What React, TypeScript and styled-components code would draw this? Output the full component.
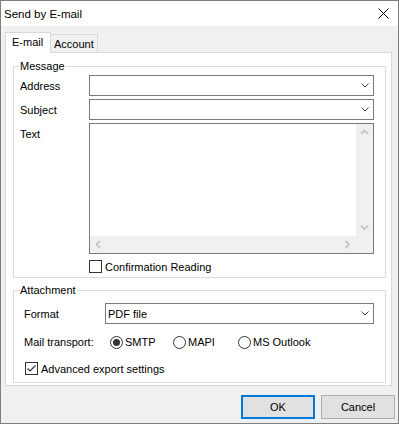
import React from 'react';
import styled, { createGlobalStyle } from 'styled-components';

const GlobalStyle = createGlobalStyle`
  html, body { margin: 0; padding: 0; background: #f0f0f0; }
  body { font-family: "Liberation Sans", Arial, sans-serif; font-size: 11px; color: #000; }
  * { box-sizing: border-box; }
`;

const Window = styled.div`
  width: 399px;
  height: 424px;
  border: 1px solid #7f7f7f;
  background: #f0f0f0;
  display: flex;
  flex-direction: column;
`;

const TitleBar = styled.div`
  height: 25px;
  background: #fff;
  display: flex;
  align-items: center;
  justify-content: space-between;
  padding: 0 9px 0 3px;
`;

const Title = styled.span`
  font-size: 11.5px;
  line-height: 14px;
`;

const CloseIcon = styled.svg`
  width: 11px;
  height: 11px;
  display: block;
`;

const Body = styled.div`
  flex: 1;
  display: flex;
  flex-direction: column;
  padding: 6px 0 4px 4px;
`;

const TabStrip = styled.div`
  display: flex;
  align-items: flex-end;
  height: 20px;
  position: relative;
  z-index: 1;
`;

const Tab = styled.div<{ $active?: boolean }>`
  width: ${p => (p.$active ? 46 : 47)}px;
  height: ${p => (p.$active ? 21 : 18)}px;
  margin-bottom: ${p => (p.$active ? -1 : 0)}px;
  border: 1px solid #d9d9d9;
  border-bottom: none;
  border-left: ${p => (p.$active ? '1px solid #d9d9d9' : 'none')};
  background: ${p => (p.$active ? '#fff' : '#f0f0f0')};
  display: flex;
  align-items: center;
  padding: ${p => (p.$active ? '0 0 3px 6px' : '1px 0 0 3px')};
  line-height: 14px;
`;

const TabPanel = styled.div`
  height: 334px;
  margin-right: 6px;
  border: 1px solid #d9d9d9;
  background: #fff;
  padding: 13px 5px 2px 7px;
  display: flex;
  flex-direction: column;
  gap: 12px;
`;

const GroupBox = styled.div<{ $h: number }>`
  position: relative;
  height: ${p => p.$h}px;
  border: 1px solid #dcdcdc;
`;

const Legend = styled.span`
  position: absolute;
  top: -8px;
  left: 5px;
  padding: 0 1px;
  background: #fff;
  line-height: 14px;
`;

const MessageGrid = styled.div`
  display: grid;
  grid-template-columns: 69px 285px;
  grid-template-rows: 21px 21px 131px 13px;
  row-gap: 3px;
  padding: 8px 0 0 6px;
`;

const FieldLabel = styled.div<{ $top?: boolean }>`
  display: flex;
  align-items: ${p => (p.$top ? 'flex-start' : 'center')};
  padding-top: ${p => (p.$top ? 4 : 0)}px;
  line-height: 14px;
`;

const Combo = styled.div`
  height: 21px;
  border: 1px solid #7a7a7a;
  background: #fff;
  display: flex;
  align-items: center;
  justify-content: space-between;
  padding: 0 4px 0 2px;
  line-height: 14px;
`;

const Chevron = styled.svg`
  width: 8px;
  height: 5px;
  display: block;
  margin-left: auto;
`;

const TextBox = styled.div`
  border: 1px solid #7a7a7a;
  background: #fff;
  display: grid;
  grid-template-columns: 1fr 17px;
  grid-template-rows: 1fr 17px;
`;

const ScrollTrack = styled.div<{ $vertical?: boolean }>`
  background: #f0f0f0;
  display: flex;
  flex-direction: ${p => (p.$vertical ? 'column' : 'row')};
  justify-content: space-between;
`;

const ScrollCorner = styled.div`
  background: #f0f0f0;
`;

const ArrowButton = styled.div`
  width: 17px;
  height: 17px;
  display: flex;
  align-items: center;
  justify-content: center;
`;

const CheckRow = styled.div`
  display: flex;
  align-items: center;
  gap: 3px;
  height: 13px;
  line-height: 14px;
`;

const ConfirmRow = styled(CheckRow)`
  margin-top: 3px;
`;

const AdvancedRow = styled(CheckRow)`
  margin-top: 13px;
  padding-left: 11px;
`;

const CheckBox = styled.div`
  width: 13px;
  height: 13px;
  border: 1px solid #333;
  background: #fff;
  flex: none;
  display: flex;
  align-items: center;
  justify-content: center;
`;

const AttachGrid = styled.div`
  display: grid;
  grid-template-columns: 81px 269px;
  padding: 12px 0 0 10px;
`;

const TransportRow = styled.div`
  display: grid;
  grid-template-columns: 86px 63px 65px auto;
  align-items: center;
  height: 14px;
  margin-top: 11px;
  padding-left: 10px;
  line-height: 14px;
`;

const RadioOption = styled.div`
  display: flex;
  align-items: center;
  gap: 2px;
`;

const Radio = styled.div<{ $checked?: boolean }>`
  width: 13px;
  height: 13px;
  border: 1px solid #333;
  border-radius: 50%;
  background: #fff;
  display: flex;
  align-items: center;
  justify-content: center;
  flex: none;
  &::after {
    content: '';
    width: 7px;
    height: 7px;
    border-radius: 50%;
    background: ${p => (p.$checked ? '#333' : 'transparent')};
  }
`;

const ButtonRow = styled.div`
  display: flex;
  justify-content: flex-end;
  gap: 6px;
  margin-top: 9px;
  padding-right: 3px;
  height: 24px;
`;

const Button = styled.button<{ $default?: boolean }>`
  width: 74px;
  height: 24px;
  margin: 0;
  padding: 0;
  font-family: inherit;
  font-size: 11px;
  color: #000;
  background: #e1e1e1;
  border: ${p => (p.$default ? '2px solid #0078d7' : '1px solid #adadad')};
  border-radius: 0;
`;

const DownChevron = () => (
  <Chevron viewBox="0 0 8 5">
    <path d="M0.5 0.5 L4 4 L7.5 0.5" fill="none" stroke="#444" strokeWidth="1" />
  </Chevron>
);

const ScrollArrow = ({ dir }: { dir: 'up' | 'down' | 'left' | 'right' }) => {
  const d = {
    up: 'M1 5 L4.5 1.5 L8 5',
    down: 'M1 1.5 L4.5 5 L8 1.5',
    left: 'M5 1 L1.5 4.5 L5 8',
    right: 'M1.5 1 L5 4.5 L1.5 8',
  }[dir];
  const vertical = dir === 'up' || dir === 'down';
  return (
    <ArrowButton>
      <svg width={vertical ? 9 : 7} height={vertical ? 7 : 9} viewBox={vertical ? '0 0 9 7' : '0 0 7 9'}>
        <path d={d} fill="none" stroke="#bfbfbf" strokeWidth="1.6" />
      </svg>
    </ArrowButton>
  );
};

export default function App() {
  return (
    <>
      <GlobalStyle />
      <Window>
        <TitleBar>
          <Title>Send by E-mail</Title>
          <CloseIcon viewBox="0 0 11 11">
            <path d="M0.5 0.5 L10.5 10.5 M10.5 0.5 L0.5 10.5" stroke="#000" strokeWidth="1" />
          </CloseIcon>
        </TitleBar>
        <Body>
          <TabStrip>
            <Tab $active>E-mail</Tab>
            <Tab>Account</Tab>
          </TabStrip>
          <TabPanel>
            <GroupBox $h={212}>
              <Legend>Message</Legend>
              <MessageGrid>
                <FieldLabel>Address</FieldLabel>
                <Combo>
                  <DownChevron />
                </Combo>
                <FieldLabel>Subject</FieldLabel>
                <Combo>
                  <DownChevron />
                </Combo>
                <FieldLabel $top>Text</FieldLabel>
                <TextBox>
                  <div />
                  <ScrollTrack $vertical>
                    <ScrollArrow dir="up" />
                    <ScrollArrow dir="down" />
                  </ScrollTrack>
                  <ScrollTrack>
                    <ScrollArrow dir="left" />
                    <ScrollArrow dir="right" />
                  </ScrollTrack>
                  <ScrollCorner />
                </TextBox>
                <div />
                <ConfirmRow>
                  <CheckBox />
                  <span>Confirmation Reading</span>
                </ConfirmRow>
              </MessageGrid>
            </GroupBox>
            <GroupBox $h={93}>
              <Legend>Attachment</Legend>
              <AttachGrid>
                <FieldLabel>Format</FieldLabel>
                <Combo>
                  <span>PDF file</span>
                  <DownChevron />
                </Combo>
              </AttachGrid>
              <TransportRow>
                <span>Mail transport:</span>
                <RadioOption>
                  <Radio $checked />
                  <span>SMTP</span>
                </RadioOption>
                <RadioOption>
                  <Radio />
                  <span>MAPI</span>
                </RadioOption>
                <RadioOption>
                  <Radio />
                  <span>MS Outlook</span>
                </RadioOption>
              </TransportRow>
              <AdvancedRow>
                <CheckBox>
                  <svg width="11" height="11" viewBox="0 0 11 11">
                    <path d="M1.5 5.5 L4 8 L9.5 2.5" fill="none" stroke="#333" strokeWidth="1.2" />
                  </svg>
                </CheckBox>
                <span>Advanced export settings</span>
              </AdvancedRow>
            </GroupBox>
          </TabPanel>
          <ButtonRow>
            <Button $default>OK</Button>
            <Button>Cancel</Button>
          </ButtonRow>
        </Body>
      </Window>
    </>
  );
}
